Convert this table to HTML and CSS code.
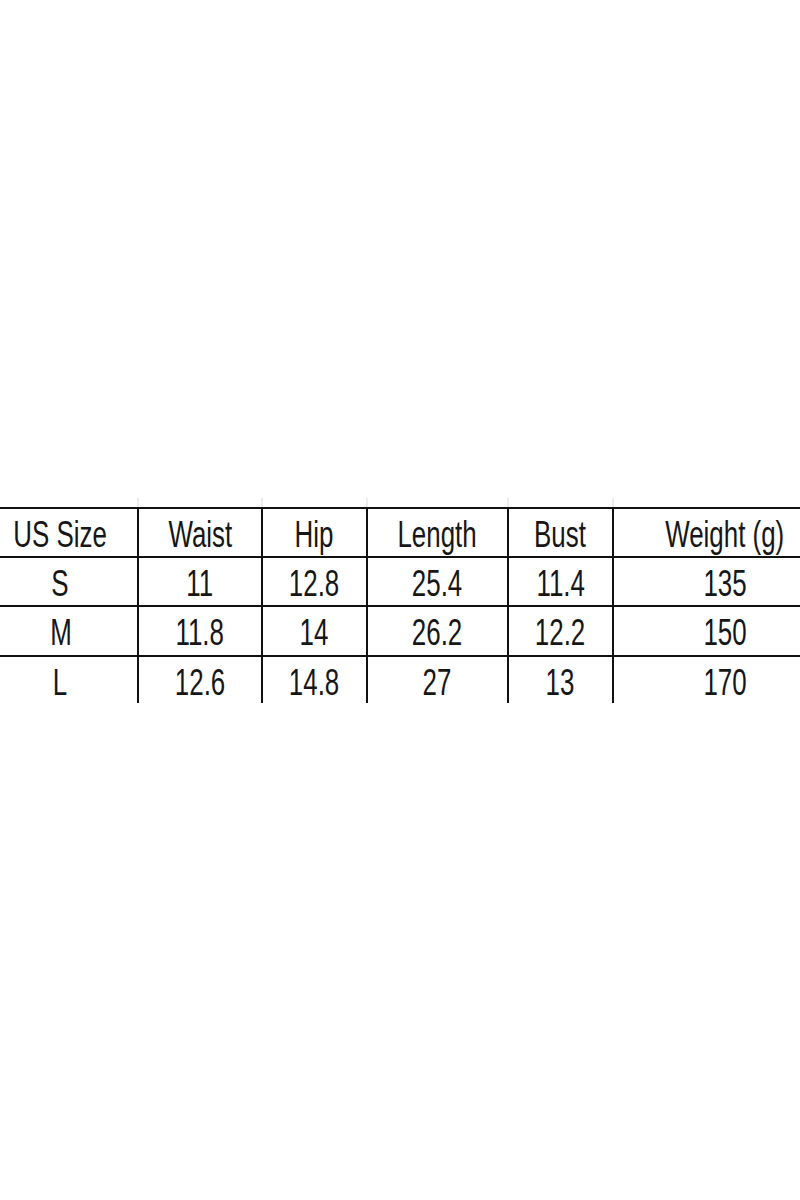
FILE: index.html
```html
<!DOCTYPE html>
<html lang="en">
<head>
<meta charset="utf-8">
<title>Size chart</title>
<link rel="stylesheet" href="styles.css">
</head>
<body>
<main class="page">
  <section class="sheet">
    <div class="grid faint">
      <div class="c"></div><div class="c"></div><div class="c"></div><div class="c"></div><div class="c"></div><div class="c"></div>
    </div>
    <div class="grid table">
      <div class="c"><span class="t">US Size</span></div>
      <div class="c"><span class="t">Waist</span></div>
      <div class="c"><span class="t">Hip</span></div>
      <div class="c"><span class="t">Length</span></div>
      <div class="c"><span class="t">Bust</span></div>
      <div class="c"><span class="t">Weight (g)</span></div>

      <div class="c"><span class="t">S</span></div>
      <div class="c"><span class="t">11</span></div>
      <div class="c"><span class="t">12.8</span></div>
      <div class="c"><span class="t">25.4</span></div>
      <div class="c"><span class="t">11.4</span></div>
      <div class="c"><span class="t">135</span></div>

      <div class="c"><span class="t">M</span></div>
      <div class="c"><span class="t">11.8</span></div>
      <div class="c"><span class="t">14</span></div>
      <div class="c"><span class="t">26.2</span></div>
      <div class="c"><span class="t">12.2</span></div>
      <div class="c"><span class="t">150</span></div>

      <div class="c"><span class="t">L</span></div>
      <div class="c"><span class="t">12.6</span></div>
      <div class="c"><span class="t">14.8</span></div>
      <div class="c"><span class="t">27</span></div>
      <div class="c"><span class="t">13</span></div>
      <div class="c"><span class="t">170</span></div>
    </div>
  </section>
</main>
</body>
</html>
```

FILE: styles.css
```css
html, body {
  margin: 0;
  padding: 0;
  background: #ffffff;
}

.page {
  width: 800px;
  height: 1200px;
  overflow: hidden;
  padding-top: 498px;
  box-sizing: border-box;
}

.sheet {
  height: 205px;
  overflow: hidden;
}

.grid {
  display: grid;
  grid-template-columns: 155px 124px 105px 141px 105px 224px;
  margin-left: -16px;
  width: max-content;
}

.faint .c {
  height: 9px;
  border-right: 2px solid #ececec;
  box-sizing: border-box;
}

.table {
  border-top: 2px solid #111111;
  grid-template-rows: 49px 49px 50px 50px;
}

.table .c {
  border-right: 2px solid #111111;
  border-bottom: 2px solid #111111;
  box-sizing: border-box;
  display: flex;
  align-items: center;
  justify-content: center;
  overflow: hidden;
}

.t {
  display: inline-block;
  font-family: "Liberation Sans", Arial, sans-serif;
  font-size: 36px;
  line-height: 1;
  color: #161616;
  transform: scaleX(0.72);
  white-space: nowrap;
  padding-top: 4px;
}
```
